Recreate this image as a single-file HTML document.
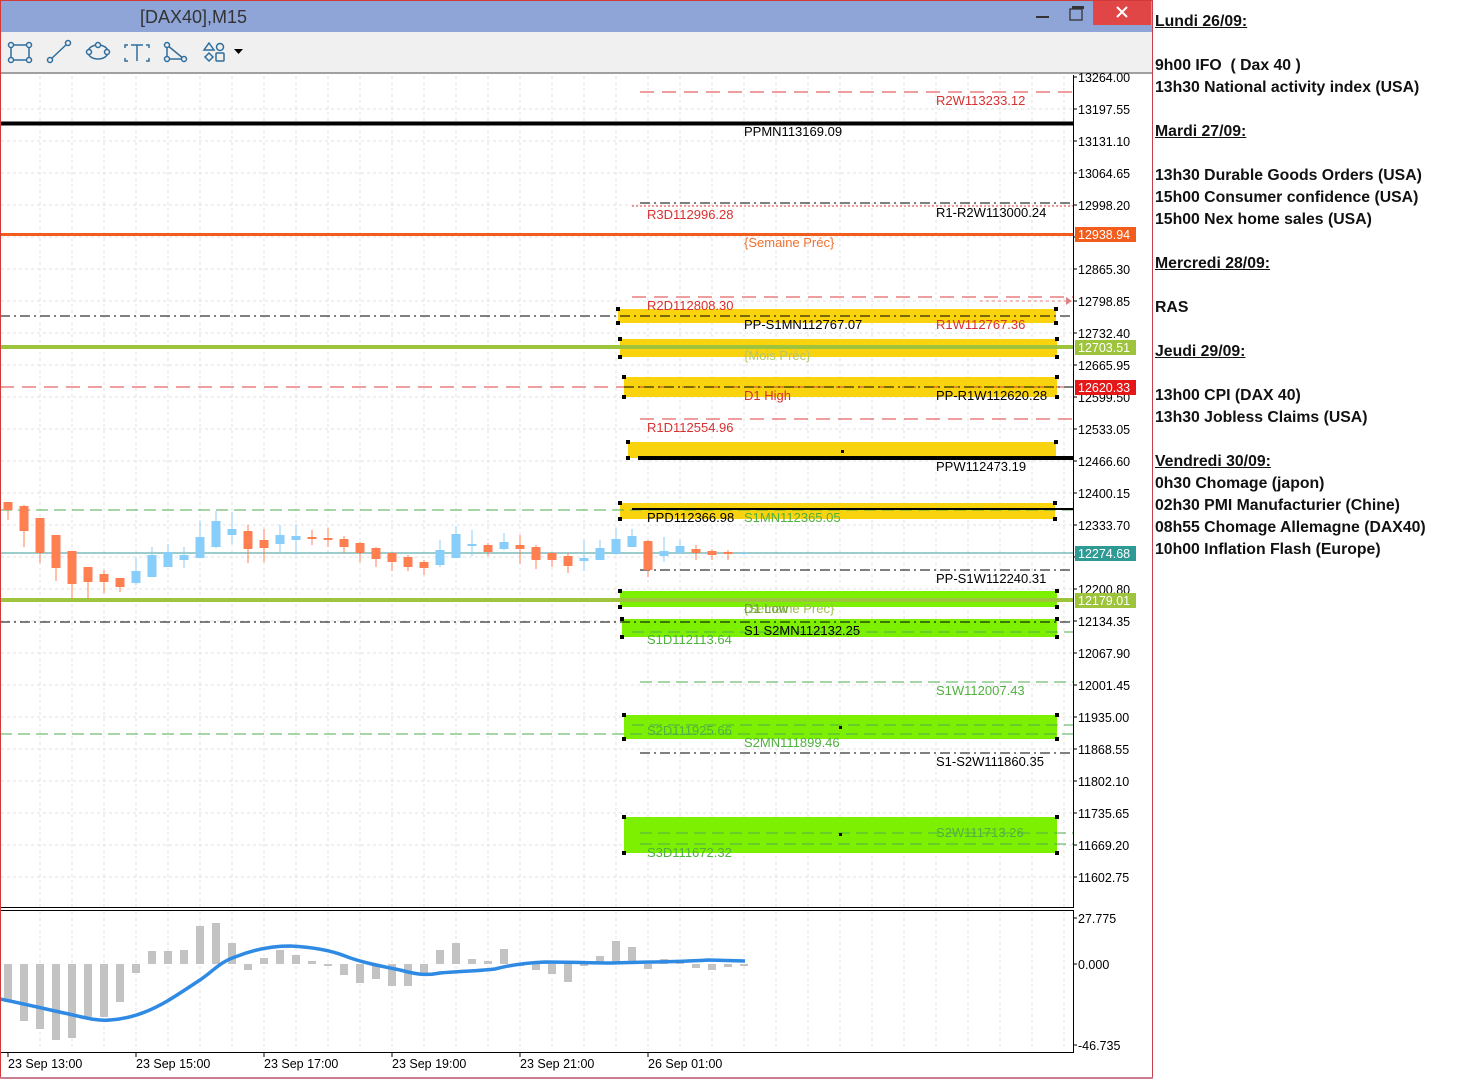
<!DOCTYPE html>
<html><head><meta charset="utf-8"><style>
html,body{margin:0;padding:0;background:#fff;width:1464px;height:1081px;overflow:hidden}
#win{position:absolute;left:0;top:0}
#notes{position:absolute;left:1155px;top:11px;font-family:"Liberation Sans",sans-serif;font-weight:bold;font-size:15.8px;line-height:22px;color:#111;white-space:pre}
#notes u{text-decoration:underline}
svg text{font-family:"Liberation Sans",sans-serif}
</style></head><body>
<svg id="win" width="1154" height="1081" viewBox="0 0 1154 1081" xmlns="http://www.w3.org/2000/svg">
<rect x="0" y="0" width="1154" height="1081" fill="#fff"/>
<rect x="0" y="0" width="1153" height="32" fill="#8fa5d7"/>
<text x="140" y="23" font-size="18" fill="#333">[DAX40],M15</text>
<rect x="1036" y="16" width="13" height="2" fill="#333"/>
<rect x="1070" y="9" width="12" height="11" fill="none" stroke="#333" stroke-width="1.3"/>
<rect x="1072" y="6" width="12" height="3" fill="#333"/>
<rect x="1093" y="1" width="58" height="24" fill="#e04646"/>
<path d="M1117 7 L1127 17 M1127 7 L1117 17" stroke="#fff" stroke-width="2"/>
<rect x="0" y="32" width="1153" height="40" fill="#f0f0f0"/>
<rect x="0" y="72" width="1153" height="2" fill="#a0a0a0"/>
<g stroke="#2f6e9c" stroke-width="1.5" fill="#f0f0f0">
<rect x="11" y="45" width="18" height="15" fill="none"/>
<circle cx="11" cy="45" r="2.5"/><circle cx="29" cy="45" r="2.5"/><circle cx="11" cy="60" r="2.5"/><circle cx="29" cy="60" r="2.5"/>
<line x1="50" y1="60" x2="68" y2="43"/><circle cx="50" cy="60" r="2.5"/><circle cx="68" cy="43" r="2.5"/>
<ellipse cx="98" cy="52" rx="10" ry="7" fill="none"/><circle cx="89" cy="52" r="2.5"/><circle cx="107" cy="52" r="2.5"/><circle cx="98" cy="45" r="2.5"/>
<path d="M128 45h-3v3M146 45h3v3M128 61h-3v-3M146 61h3v-3M131 45h12M137 45v16" fill="none"/>
<path d="M167 45 L167 59 L184 59 Z" fill="none"/><circle cx="167" cy="45" r="2.5"/><circle cx="167" cy="59" r="2.5"/><circle cx="184" cy="59" r="2.5"/>
<path d="M209 43 L214 50 L204 50 Z" fill="none"/><circle cx="220" cy="47" r="3.5" fill="none"/><path d="M209 53 L213 57 L209 61 L205 57Z" fill="none"/><rect x="216" y="53" width="8" height="8" rx="1" fill="none"/>
</g>
<path d="M234 49h9l-4.5 5z" fill="#000"/>
<rect x="1" y="75" width="1072" height="833" fill="#fff"/>
<g stroke="#e2e2e2" stroke-width="1" stroke-dasharray="3,3">
<path d="M40 76V907M72 76V907M104 76V907M136 76V907M168 76V907M200 76V907M232 76V907M264 76V907M296 76V907M328 76V907M360 76V907M392 76V907M424 76V907M456 76V907M488 76V907M520 76V907M552 76V907M584 76V907M616 76V907M648 76V907M680 76V907M712 76V907M744 76V907M776 76V907M808 76V907M840 76V907M872 76V907M904 76V907M936 76V907M968 76V907M1000 76V907M1032 76V907M1064 76V907"/>
<path d="M1 109H1073M1 141H1073M1 173H1073M1 205H1073M1 237H1073M1 269H1073M1 301H1073M1 333H1073M1 365H1073M1 397H1073M1 429H1073M1 461H1073M1 493H1073M1 525H1073M1 557H1073M1 589H1073M1 621H1073M1 653H1073M1 685H1073M1 717H1073M1 749H1073M1 781H1073M1 813H1073M1 845H1073M1 877H1073"/>
<path d="M40 912V1051M72 912V1051M104 912V1051M136 912V1051M168 912V1051M200 912V1051M232 912V1051M264 912V1051M296 912V1051M328 912V1051M360 912V1051M392 912V1051M424 912V1051M456 912V1051M488 912V1051M520 912V1051M552 912V1051M584 912V1051M616 912V1051M648 912V1051M680 912V1051M712 912V1051M744 912V1051M776 912V1051M808 912V1051M840 912V1051M872 912V1051M904 912V1051M936 912V1051M968 912V1051M1000 912V1051M1032 912V1051M1064 912V1051"/>
</g>
<g fill="#f9d30d">
<rect x="618" y="309" width="438" height="14"/>
<rect x="620" y="339" width="437" height="18"/>
<rect x="624" y="377" width="433" height="20"/>
<rect x="628" y="442" width="428" height="16"/>
<rect x="620" y="503" width="435" height="16"/>
</g>
<g fill="#7cf000">
<rect x="620" y="591" width="437" height="16"/>
<rect x="622" y="619" width="435" height="18"/>
<rect x="624" y="715" width="433" height="24"/>
<rect x="624" y="817" width="433" height="36"/>
</g>
<g fill="none">
<path d="M640 92H1073" stroke="#dc3c3c" stroke-dasharray="14,8"/>
<path d="M0 123.5H1073" stroke="#000" stroke-width="4"/>
<path d="M640 203H1073" stroke="#000" stroke-dasharray="10,4,2,4"/>
<path d="M632 206H1073" stroke="#dc3c3c" stroke-dasharray="2,2"/>
<path d="M0 234.5H1073" stroke="#f25c1c" stroke-width="3"/>
<path d="M632 297H1073" stroke="#dc3c3c" stroke-dasharray="14,8"/>
<path d="M980 301H1066" stroke="#e08080" stroke-dasharray="3,3"/>
<path d="M1066 297L1072 301L1066 305Z" fill="#e08080"/>
<path d="M0 316H1073" stroke="#000" stroke-dasharray="10,4,2,4"/>
<path d="M0 347H1073" stroke="#9dc43c" stroke-width="4"/>
<path d="M0 387H1073" stroke="#dc3c3c" stroke-dasharray="14,8"/>
<path d="M624 387H1073" stroke="#000" stroke-dasharray="10,4,2,4"/>
<path d="M640 419H1073" stroke="#dc3c3c" stroke-dasharray="14,8"/>
<path d="M638 458H1073" stroke="#000" stroke-width="4"/>
<path d="M0 510H1073" stroke="#4cae4c" stroke-dasharray="12,6"/>
<path d="M632 509H1073" stroke="#000" stroke-width="2"/>
<path d="M0 553H1073" stroke="#3a9a9a" stroke-width="1"/>
<path d="M640 570H1073" stroke="#000" stroke-dasharray="10,4,2,4"/>
<path d="M0 600H1073" stroke="#9dc43c" stroke-width="4"/>
<path d="M0 622H1073" stroke="#000" stroke-dasharray="10,4,2,4"/>
<path d="M632 632H1073" stroke="#4cae4c" stroke-dasharray="12,6"/>
<path d="M640 682H1073" stroke="#4cae4c" stroke-dasharray="12,6"/>
<path d="M632 725H1073" stroke="#4cae4c" stroke-dasharray="12,6"/>
<path d="M0 734H1073" stroke="#4cae4c" stroke-dasharray="12,6"/>
<path d="M640 753H1073" stroke="#000" stroke-dasharray="10,4,2,4"/>
<path d="M640 833H1073" stroke="#4cae4c" stroke-dasharray="12,6"/>
<path d="M640 844H1073" stroke="#4cae4c" stroke-dasharray="12,6"/>
</g>
<g fill="#000">
<rect x="616" y="307" width="4" height="4"/><rect x="1054" y="307" width="4" height="4"/><rect x="616" y="321" width="4" height="4"/><rect x="1054" y="321" width="4" height="4"/>
<rect x="618" y="337" width="4" height="4"/><rect x="1055" y="337" width="4" height="4"/><rect x="618" y="355" width="4" height="4"/><rect x="1055" y="355" width="4" height="4"/>
<rect x="622" y="375" width="4" height="4"/><rect x="1055" y="375" width="4" height="4"/><rect x="622" y="395" width="4" height="4"/><rect x="1055" y="395" width="4" height="4"/>
<rect x="626" y="440" width="4" height="4"/><rect x="1054" y="440" width="4" height="4"/><rect x="626" y="456" width="4" height="4"/><rect x="841" y="450" width="3" height="3"/>
<rect x="618" y="501" width="4" height="4"/><rect x="1053" y="501" width="4" height="4"/><rect x="618" y="517" width="4" height="4"/><rect x="1053" y="517" width="4" height="4"/>
<rect x="618" y="589" width="4" height="4"/><rect x="1055" y="589" width="4" height="4"/><rect x="618" y="605" width="4" height="4"/><rect x="1055" y="605" width="4" height="4"/>
<rect x="620" y="617" width="4" height="4"/><rect x="1055" y="617" width="4" height="4"/><rect x="620" y="635" width="4" height="4"/><rect x="1055" y="635" width="4" height="4"/>
<rect x="622" y="713" width="4" height="4"/><rect x="1055" y="713" width="4" height="4"/><rect x="622" y="737" width="4" height="4"/><rect x="1055" y="737" width="4" height="4"/><rect x="839" y="726" width="3" height="3"/>
<rect x="622" y="815" width="4" height="4"/><rect x="1055" y="815" width="4" height="4"/><rect x="622" y="851" width="4" height="4"/><rect x="1055" y="851" width="4" height="4"/><rect x="839" y="833" width="3" height="3"/>
</g>
<g stroke-width="1">
<g fill="#ff7f50" stroke="#ff7f50">
<path d="M8 502V520M24 505V547M40 518V563M56 535V581M72 551V598M88 567V598M104 570V593M120 578V592M248 525V563M264 529V562M312 530V545M328 528V547M344 536V553M360 542V562M376 547V567M392 552V571M408 555V571M424 560V575M488 543V556M520 535V564M536 545V569M552 552V567M568 553V573M648 540V577M696 545V560M712 549V560M728 550V560"/>
<rect x="3.5" y="502" width="9" height="8" stroke="none"/><rect x="19.5" y="506" width="9" height="25" stroke="none"/><rect x="35.5" y="518" width="9" height="35" stroke="none"/><rect x="51.5" y="535" width="9" height="33" stroke="none"/><rect x="67.5" y="551" width="9" height="33" stroke="none"/><rect x="83.5" y="567" width="9" height="15" stroke="none"/><rect x="99.5" y="574" width="9" height="8" stroke="none"/><rect x="115.5" y="578" width="9" height="9" stroke="none"/><rect x="243.5" y="531" width="9" height="18" stroke="none"/><rect x="259.5" y="540" width="9" height="8" stroke="none"/><rect x="307.5" y="537" width="9" height="2" stroke="none"/><rect x="323.5" y="538" width="9" height="2" stroke="none"/><rect x="339.5" y="539" width="9" height="8" stroke="none"/><rect x="355.5" y="543" width="9" height="10" stroke="none"/><rect x="371.5" y="548" width="9" height="11" stroke="none"/><rect x="387.5" y="553" width="9" height="9" stroke="none"/><rect x="403.5" y="557" width="9" height="10" stroke="none"/><rect x="419.5" y="562" width="9" height="6" stroke="none"/><rect x="483.5" y="545" width="9" height="7" stroke="none"/><rect x="515.5" y="545" width="9" height="4" stroke="none"/><rect x="531.5" y="547" width="9" height="13" stroke="none"/><rect x="547.5" y="553" width="9" height="7" stroke="none"/><rect x="563.5" y="556" width="9" height="10" stroke="none"/><rect x="643.5" y="541" width="9" height="29" stroke="none"/><rect x="691.5" y="549" width="9" height="4" stroke="none"/><rect x="707.5" y="551" width="9" height="4" stroke="none"/><rect x="723.5" y="552" width="9" height="2" stroke="none"/>
</g>
<g fill="#87cefa" stroke="#87cefa">
<path d="M136 558V585M152 547V577M168 544V567M184 547V568M200 521V558M216 511V548M232 512V544M280 525V552M296 525V555M440 540V567M456 526V558M472 530V556M504 533V550M584 540V571M600 540V560M616 528V555M632 529V547M664 537V562M680 540V553M744 552V555"/>
<rect x="131.5" y="571" width="9" height="12" stroke="none"/><rect x="147.5" y="555" width="9" height="22" stroke="none"/><rect x="163.5" y="552" width="9" height="15" stroke="none"/><rect x="179.5" y="555" width="9" height="5" stroke="none"/><rect x="195.5" y="537" width="9" height="21" stroke="none"/><rect x="211.5" y="521" width="9" height="26" stroke="none"/><rect x="227.5" y="529" width="9" height="6" stroke="none"/><rect x="275.5" y="535" width="9" height="9" stroke="none"/><rect x="291.5" y="536" width="9" height="4" stroke="none"/><rect x="435.5" y="550" width="9" height="15" stroke="none"/><rect x="451.5" y="534" width="9" height="24" stroke="none"/><rect x="467.5" y="544" width="9" height="2" stroke="none"/><rect x="499.5" y="542" width="9" height="7" stroke="none"/><rect x="579.5" y="558" width="9" height="3" stroke="none"/><rect x="595.5" y="548" width="9" height="12" stroke="none"/><rect x="611.5" y="539" width="9" height="15" stroke="none"/><rect x="627.5" y="536" width="9" height="11" stroke="none"/><rect x="659.5" y="551" width="9" height="5" stroke="none"/><rect x="675.5" y="546" width="9" height="7" stroke="none"/><rect x="739.5" y="553" width="9" height="1" stroke="none"/>
</g>
</g>
<g font-size="13">
<text x="936" y="105" fill="#d83030">R2W113233.12</text>
<text x="744" y="136" fill="#000">PPMN113169.09</text>
<text x="647" y="219" fill="#d83030">R3D112996.28</text>
<text x="936" y="217" fill="#000">R1-R2W113000.24</text>
<text x="744" y="247" fill="#f07030">{Semaine Préc}</text>
<text x="647" y="310" fill="#d83030">R2D112808.30</text>
<text x="744" y="329" fill="#000">PP-S1MN112767.07</text>
<text x="936" y="329" fill="#d83030">R1W112767.36</text>
<text x="744" y="360" fill="#b0c870">{Mois Préc}</text>
<text x="744" y="400" fill="#d83030">D1 High</text>
<text x="936" y="400" fill="#000">PP-R1W112620.28</text>
<text x="647" y="432" fill="#d83030">R1D112554.96</text>
<text x="936" y="471" fill="#000">PPW112473.19</text>
<text x="647" y="522" fill="#000">PPD112366.98</text>
<text x="744" y="522" fill="#50b040">S1MN112365.05</text>
<text x="936" y="583" fill="#000">PP-S1W112240.31</text>
<text x="744" y="613" fill="#9fbf50">{Semaine Préc}</text>
<text x="744" y="613" fill="#70a040">D1 Low</text>
<text x="744" y="635" fill="#000">S1 S2MN112132.25</text>
<text x="647" y="644" fill="#50b040">S1D112113.64</text>
<text x="936" y="695" fill="#50b040">S1W112007.43</text>
<text x="647" y="735" fill="#50b040">S2D111925.66</text>
<text x="744" y="747" fill="#50b040">S2MN111899.46</text>
<text x="936" y="766" fill="#000">S1-S2W111860.35</text>
<text x="936" y="837" fill="#50b040">S2W111713.26</text>
<text x="647" y="857" fill="#50b040">S3D111672.32</text>
</g>
<rect x="1073" y="75" width="1" height="833" fill="#000"/>
<g stroke="#000"><path d="M1073 77h4M1073 109h4M1073 141h4M1073 173h4M1073 205h4M1073 237h4M1073 269h4M1073 301h4M1073 333h4M1073 365h4M1073 397h4M1073 429h4M1073 461h4M1073 493h4M1073 525h4M1073 557h4M1073 589h4M1073 621h4M1073 653h4M1073 685h4M1073 717h4M1073 749h4M1073 781h4M1073 813h4M1073 845h4M1073 877h4"/></g>
<g font-size="12.5" fill="#000">
<text x="1078" y="82">13264.00</text><text x="1078" y="114">13197.55</text><text x="1078" y="146">13131.10</text><text x="1078" y="178">13064.65</text><text x="1078" y="210">12998.20</text><text x="1078" y="274">12865.30</text><text x="1078" y="306">12798.85</text><text x="1078" y="338">12732.40</text><text x="1078" y="370">12665.95</text><text x="1078" y="402">12599.50</text><text x="1078" y="434">12533.05</text><text x="1078" y="466">12466.60</text><text x="1078" y="498">12400.15</text><text x="1078" y="530">12333.70</text><text x="1078" y="594">12200.80</text><text x="1078" y="626">12134.35</text><text x="1078" y="658">12067.90</text><text x="1078" y="690">12001.45</text><text x="1078" y="722">11935.00</text><text x="1078" y="754">11868.55</text><text x="1078" y="786">11802.10</text><text x="1078" y="818">11735.65</text><text x="1078" y="850">11669.20</text><text x="1078" y="882">11602.75</text>
</g>
<rect x="1075" y="227" width="61" height="15" fill="#f25c1c"/><text x="1078" y="239" font-size="12.5" fill="#fff">12938.94</text>
<rect x="1075" y="340" width="61" height="15" fill="#9dc43c"/><text x="1078" y="352" font-size="12.5" fill="#fff">12703.51</text>
<rect x="1075" y="380" width="61" height="15" fill="#e41818"/><text x="1078" y="392" font-size="12.5" fill="#fff">12620.33</text>
<rect x="1075" y="546" width="61" height="15" fill="#2e9a94"/><text x="1078" y="558" font-size="12.5" fill="#fff">12274.68</text>
<rect x="1075" y="593" width="61" height="15" fill="#9dc43c"/><text x="1078" y="605" font-size="12.5" fill="#fff">12179.01</text>
<rect x="1" y="907" width="1073" height="1" fill="#000"/>
<rect x="1" y="910" width="1073" height="1" fill="#000"/>
<g fill="#c3c3c3">
<rect x="4" y="964" width="8" height="36"/><rect x="20" y="964" width="8" height="57"/><rect x="36" y="964" width="8" height="65"/><rect x="52" y="964" width="8" height="76"/><rect x="68" y="964" width="8" height="74"/><rect x="84" y="964" width="8" height="53"/><rect x="100" y="964" width="8" height="53"/><rect x="116" y="964" width="8" height="38"/><rect x="132" y="964" width="8" height="9"/>
<rect x="148" y="951" width="8" height="13"/><rect x="164" y="951" width="8" height="13"/><rect x="180" y="950" width="8" height="14"/><rect x="196" y="926" width="8" height="38"/><rect x="212" y="923" width="8" height="41"/><rect x="228" y="943" width="8" height="21"/>
<rect x="244" y="964" width="8" height="6"/><rect x="260" y="958" width="8" height="6"/><rect x="276" y="950" width="8" height="14"/><rect x="292" y="955" width="8" height="9"/><rect x="308" y="961" width="8" height="3"/><rect x="324" y="964" width="8" height="2"/>
<rect x="340" y="964" width="8" height="11"/><rect x="356" y="964" width="8" height="19"/><rect x="372" y="964" width="8" height="15"/><rect x="388" y="964" width="8" height="22"/><rect x="404" y="964" width="8" height="22"/><rect x="420" y="964" width="8" height="11"/>
<rect x="436" y="950" width="8" height="14"/><rect x="452" y="943" width="8" height="21"/><rect x="468" y="959" width="8" height="5"/><rect x="484" y="961" width="8" height="3"/><rect x="500" y="949" width="8" height="15"/><rect x="516" y="964" width="8" height="2"/>
<rect x="532" y="964" width="8" height="6"/><rect x="548" y="964" width="8" height="10"/><rect x="564" y="964" width="8" height="18"/><rect x="580" y="964" width="8" height="2"/><rect x="596" y="956" width="8" height="8"/><rect x="612" y="941" width="8" height="23"/><rect x="628" y="947" width="8" height="17"/>
<rect x="644" y="964" width="8" height="5"/><rect x="660" y="959" width="8" height="5"/><rect x="676" y="961" width="8" height="3"/><rect x="692" y="964" width="8" height="4"/><rect x="708" y="964" width="8" height="6"/><rect x="724" y="964" width="8" height="3"/><rect x="740" y="964" width="8" height="2"/>
</g>
<path d="M0 999 C20 1003 50 1010 73 1015 C90 1019 100 1021 110 1020 C125 1019 135 1016 145 1012 C165 1004 180 993 200 980 C212 972 220 962 235 957 C250 951 270 946 290 946 C310 947 330 950 345 956 C360 962 380 966 400 970 C415 974 425 976 440 973 C460 971 480 971 495 969 C510 965 525 963 545 962 C570 962 590 963 611 963 C640 962 680 962 708 960 L745 961" fill="none" stroke="#2f8ae4" stroke-width="3.5"/>
<rect x="1073" y="911" width="1" height="141" fill="#000"/>
<g stroke="#000"><path d="M1073 918h4M1073 964h4M1073 1045h4"/></g>
<g font-size="12.5" fill="#000"><text x="1078" y="923">27.775</text><text x="1078" y="969">0.000</text><text x="1078" y="1050">-46.735</text></g>
<rect x="1" y="1052" width="1073" height="1" fill="#000"/>
<g stroke="#000"><path d="M8 1052v5M136 1052v5M264 1052v5M392 1052v5M520 1052v5M648 1052v5"/></g>
<g font-size="12.5" fill="#000">
<text x="8" y="1068">23 Sep 13:00</text><text x="136" y="1068">23 Sep 15:00</text><text x="264" y="1068">23 Sep 17:00</text><text x="392" y="1068">23 Sep 19:00</text><text x="520" y="1068">23 Sep 21:00</text><text x="648" y="1068">26 Sep 01:00</text>
</g>
<rect x="0" y="0" width="1" height="1079" fill="#d23a3a"/>
<rect x="1152" y="0" width="1" height="1079" fill="#c84050"/>
<rect x="0" y="1077" width="1153" height="2" fill="#c88090"/>
<rect x="0" y="0" width="1153" height="1" fill="#d23a3a"/>
</svg>
<div id="notes"><u>Lundi 26/09:</u>

9h00 IFO  ( Dax 40 )
13h30 National activity index (USA)

<u>Mardi 27/09:</u>

13h30 Durable Goods Orders (USA)
15h00 Consumer confidence (USA)
15h00 Nex home sales (USA)

<u>Mercredi 28/09:</u>

RAS

<u>Jeudi 29/09:</u>

13h00 CPI (DAX 40)
13h30 Jobless Claims (USA)

<u>Vendredi 30/09:</u>
0h30 Chomage (japon)
02h30 PMI Manufacturier (Chine)
08h55 Chomage Allemagne (DAX40)
10h00 Inflation Flash (Europe)</div>
</body></html>
